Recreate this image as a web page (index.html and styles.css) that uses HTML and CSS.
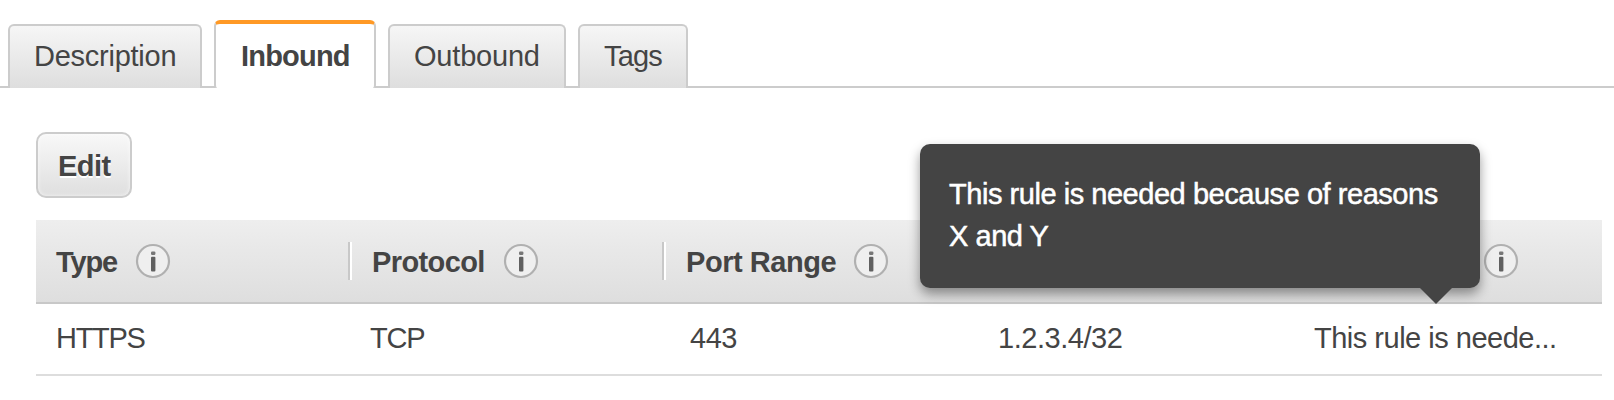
FILE: index.html
```html
<!DOCTYPE html>
<html lang="en">
<head>
<meta charset="utf-8">
<title>Security group rules</title>
<link rel="stylesheet" href="styles.css">
</head>
<body>
<svg class="defs" width="0" height="0" aria-hidden="true">
  <symbol id="info" viewBox="0 0 36 36">
    <circle cx="18" cy="18" r="16" fill="#efefef" stroke="#b0b0b0" stroke-width="2.2"/>
    <rect x="16" y="8.4" width="4.4" height="3.6" rx="1.2" fill="#777"/>
    <rect x="16" y="13.8" width="4.4" height="14.8" rx="1" fill="#606060"/>
  </symbol>
</svg>
<nav class="tabs">
  <a class="tab tab-description"><span>Description</span></a>
  <a class="tab tab-inbound active"><span>Inbound</span></a>
  <a class="tab tab-outbound"><span>Outbound</span></a>
  <a class="tab tab-tags"><span>Tags</span></a>
</nav>
<main class="panel">
  <button class="edit"><span>Edit</span></button>
  <div class="table">
    <div class="row head">
      <div class="th"><span class="h-type">Type</span><svg class="info"><use href="#info"/></svg></div>
      <div class="th"><span class="h-protocol">Protocol</span><svg class="info"><use href="#info"/></svg></div>
      <div class="th"><span class="h-port">Port Range</span><svg class="info"><use href="#info"/></svg></div>
      <div class="th"></div>
      <div class="th last"><svg class="info"><use href="#info"/></svg></div>
    </div>
    <div class="row body">
      <div class="td c-type"><span>HTTPS</span></div>
      <div class="td c-protocol"><span>TCP</span></div>
      <div class="td c-port"><span>443</span></div>
      <div class="td c-source"><span>1.2.3.4/32</span></div>
      <div class="td c-note"><span>This rule is neede...</span></div>
    </div>
    <div class="tooltip">This rule is needed because of reasons<br>X and Y</div>
  </div>
</main>
</body>
</html>
```
FILE: styles.css
```css
* { box-sizing: border-box; }
body {
  margin: 0;
  height: 400px;
  overflow: hidden;
  background: #fff;
  color: #444;
  font: 29px/42px "Liberation Sans", Arial, sans-serif;
  letter-spacing: -.46px;
  white-space: nowrap;
}
.defs { position: absolute; }
.tabs {
  display: flex;
  align-items: flex-end;
  gap: 12px;
  height: 88px;
  padding-left: 8px;
  background: linear-gradient(#ccc, #ccc) bottom / 100% 2px no-repeat;
}
.tab {
  height: 64px;
  padding: 9px 0 0 24px;
  border: 2px solid #ccc;
  border-bottom: 0;
  border-radius: 6px 6px 0 0;
  background: linear-gradient(#f6f6f6, #dedede);
}
.tab-description { width: 194px; letter-spacing: -.25px; }
.tab-inbound { width: 162px; padding-left: 25px; letter-spacing: -.8px; }
.tab-outbound { width: 178px; letter-spacing: -.2px; }
.tab-tags { width: 110px; letter-spacing: -.8px; }
.tab.active {
  height: 68px;
  padding-top: 11px;
  border-top: 4px solid #ff9925;
  border-radius: 6px 6px 3px 3px;
  background: #fff;
  font-weight: bold;
}
.panel { padding: 44px 12px 0 36px; }
.edit {
  display: block;
  width: 96px;
  height: 66px;
  padding: 1px 0 0 20px;
  border: 2px solid #ccc;
  border-radius: 10px;
  background: linear-gradient(#f8f8f8, #dfdfdf);
  box-shadow: inset 0 0 4px rgba(255, 255, 255, .7);
  color: #444;
  font: bold 29px/42px "Liberation Sans", Arial, sans-serif;
  letter-spacing: -.5px;
  text-align: left;
  text-shadow: 0 2px 0 #fff;
}
.table { position: relative; margin-top: 22px; }
.row { display: grid; grid-template-columns: repeat(4, 314px) 1fr; }
.head {
  height: 84px;
  border-bottom: 2px solid #c8c8c8;
  background: linear-gradient(#eee, #dedede);
  font-weight: bold;
}
.th {
  display: flex;
  align-items: center;
  gap: 17px;
  height: 38px;
  margin-top: 22px;
  padding-left: 20px;
}
.th span { padding-top: 2px; }
.th + .th {
  padding-left: 20px;
  border-left: 2px solid #fff;
  box-shadow: -2px 0 0 #c8c8c8;
}
.th.last { padding-left: 191px; border: 0; box-shadow: none; }
.info { flex: none; width: 36px; height: 36px; }
.h-type { width: 62px; letter-spacing: -1.1px; }
.h-protocol { width: 114px; letter-spacing: -.6px; }
.h-port { width: 150px; letter-spacing: -.45px; }
.body { height: 72px; border-bottom: 2px solid #ddd; }
.td { padding: 13px 0 0 20px; }
.c-type { letter-spacing: -1.3px; }
.c-protocol { letter-spacing: -1.2px; }
.c-port { padding-left: 26px; }
.c-note { padding-left: 22px; letter-spacing: -.5px; }
.tooltip {
  position: absolute;
  left: 884px;
  top: -76px;
  width: 560px;
  height: 144px;
  padding: 29px 0 0 29px;
  border-radius: 10px;
  background: #444;
  box-shadow: 0 6px 12px rgba(0, 0, 0, .4);
  color: #fff;
  -webkit-text-stroke: .5px #fff;
}
.tooltip::after {
  content: "";
  position: absolute;
  left: 500px;
  top: 100%;
  border: 16px solid transparent;
  border-top-color: #444;
  border-bottom: 0;
}
```
